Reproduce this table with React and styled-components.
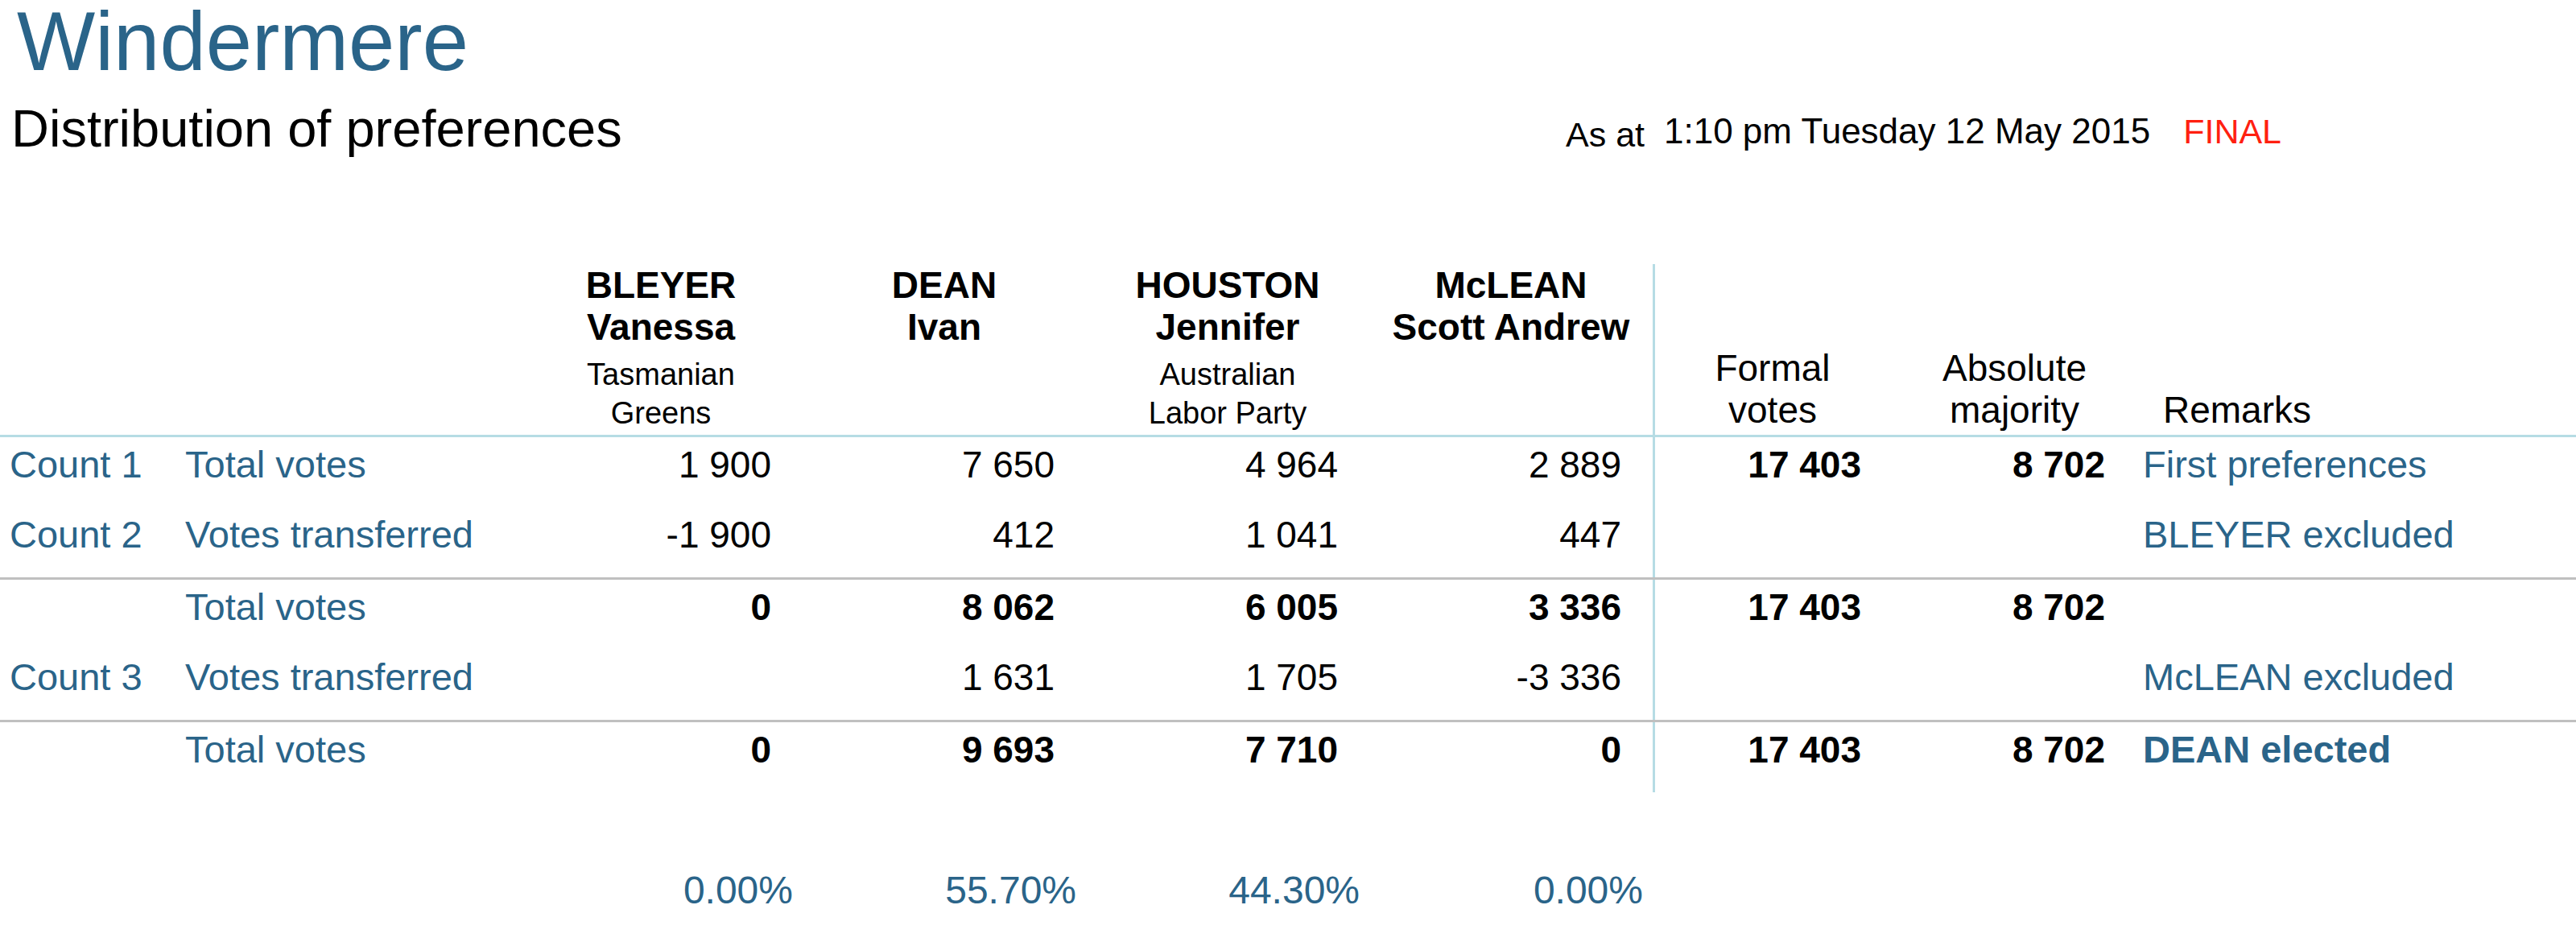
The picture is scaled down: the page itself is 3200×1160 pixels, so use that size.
import React from 'react'
import styled, { createGlobalStyle } from 'styled-components'

const candidates = [
  { surname: 'BLEYER', given: 'Vanessa', party: ['Tasmanian', 'Greens'] },
  { surname: 'DEAN', given: 'Ivan', party: [] },
  { surname: 'HOUSTON', given: 'Jennifer', party: ['Australian', 'Labor Party'] },
  { surname: 'McLEAN', given: 'Scott Andrew', party: [] },
]

const rows = [
  { count: 'Count 1', label: 'Total votes', votes: ['1 900', '7 650', '4 964', '2 889'], formal: '17 403', majority: '8 702', remark: 'First preferences' },
  { count: 'Count 2', label: 'Votes transferred', votes: ['-1 900', '412', '1 041', '447'], remark: 'BLEYER excluded', divider: true },
  { label: 'Total votes', votes: ['0', '8 062', '6 005', '3 336'], formal: '17 403', majority: '8 702', bold: true },
  { count: 'Count 3', label: 'Votes transferred', votes: ['', '1 631', '1 705', '-3 336'], remark: 'McLEAN excluded', divider: true },
  { label: 'Total votes', votes: ['0', '9 693', '7 710', '0'], formal: '17 403', majority: '8 702', bold: true, remark: 'DEAN elected', strong: true },
]

const percentages = ['0.00%', '55.70%', '44.30%', '0.00%']

const App = () => {
  return (
    <>
      <GlobalStyle />
      <Page>
        <Header>
          <Title>Windermere</Title>
          <SubRow>
            <Subtitle>Distribution of preferences</Subtitle>
            <Stamp>
              As at
              <StampTime>1:10 pm Tuesday 12 May 2015</StampTime>
              <Final>FINAL</Final>
            </Stamp>
          </SubRow>
        </Header>

        <Table>
          <HeadRow>
            <div />
            <div />
            {candidates.map(c => (
              <CandHead key={c.surname}>
                <Name>{c.surname}</Name>
                <Name>{c.given}</Name>
                {c.party.length > 0 && (
                  <Party>
                    {c.party.map(line => <div key={line}>{line}</div>)}
                  </Party>
                )}
              </CandHead>
            ))}
            <StatHead $rule>Formal<br />votes</StatHead>
            <StatHead>Absolute<br />majority</StatHead>
            <RemarksHead>Remarks</RemarksHead>
          </HeadRow>

          {rows.map((r, i) => (
            <BodyRow key={i} $divider={r.divider}>
              <LabelCell>{r.count}</LabelCell>
              <LabelCell>{r.label}</LabelCell>
              {r.votes.map((v, j) => (
                <NumCell key={j} $bold={r.bold}>{v}</NumCell>
              ))}
              <NumCell $bold $rule>{r.formal}</NumCell>
              <NumCell $bold>{r.majority}</NumCell>
              <RemarkCell $bold={r.strong}>{r.remark}</RemarkCell>
            </BodyRow>
          ))}
        </Table>

        <PercentRow>
          <div />
          <div />
          {percentages.map((p, i) => (
            <PercentCell key={i}>{p}</PercentCell>
          ))}
        </PercentRow>
      </Page>
    </>
  )
}

export default App

const GlobalStyle = createGlobalStyle`
    * {
        box-sizing: border-box;
    }
    body {
        margin: 0;
        background: #fff;
        font-family: "Liberation Sans", Arial, Helvetica, sans-serif;
        color: #000;
    }
`

const BLUE = '#2a6489'
const RULE = '#b6dce4'
const COLUMNS = '218px 427px repeat(4, 352px) 298px 303px 1fr'

const Page = styled.div`
    width: 3200px;
`
const Header = styled.header`
    padding: 0 14px;
`
const Title = styled.h1`
    margin: 0;
    padding-left: 7px;
    font-size: 103px;
    font-weight: normal;
    line-height: 103px;
    color: ${BLUE};
`
const SubRow = styled.div`
    display: grid;
    grid-template-columns: 1931px auto;
    align-items: baseline;
    height: 74px;
    margin-top: 20px;
`
const Subtitle = styled.h2`
    margin: 0;
    font-size: 65px;
    font-weight: normal;
    line-height: 74px;
`
const Stamp = styled.div`
    font-size: 43px;
    line-height: 43px;
    white-space: nowrap;
`
const StampTime = styled.span`
    margin-left: 24px;
    font-size: 44px;
    vertical-align: 4px;
`
const Final = styled.span`
    margin-left: 41px;
    vertical-align: 4px;
    color: #ff2010;
`
const Table = styled.div`
    margin-top: 131px;
    font-size: 46px;
    line-height: 52px;
`
const HeadRow = styled.div`
    display: grid;
    grid-template-columns: ${COLUMNS};
    height: 215px;
    border-bottom: 3px solid ${RULE};
`
const CandHead = styled.div`
    padding: 0 10px;
    text-align: center;
`
const Name = styled.div`
    font-weight: bold;
    white-space: nowrap;
`
const Party = styled.div`
    margin-top: 9px;
    font-size: 38px;
    line-height: 48px;
`
const StatHead = styled.div`
    display: flex;
    flex-direction: column;
    justify-content: flex-end;
    padding: 0 39px 5px;
    text-align: center;
    ${p => p.$rule && `border-left: 3px solid ${RULE}; padding-left: 36px;`}
`
const RemarksHead = styled.div`
    display: flex;
    flex-direction: column;
    justify-content: flex-end;
    padding: 0 0 5px 33px;
`
const BodyRow = styled.div`
    display: grid;
    grid-template-columns: ${COLUMNS};
    height: ${p => p.$divider ? '90px' : '87px'};
    border-bottom: ${p => p.$divider ? '3px solid #c0c0c0' : 'none'};
`
const LabelCell = styled.div`
    padding: 8px 0 0 12px;
    font-size: 47px;
    color: ${BLUE};
    white-space: nowrap;
`
const NumCell = styled.div`
    padding: 8px 39px 0;
    text-align: right;
    font-weight: ${p => p.$bold ? 'bold' : 'normal'};
    white-space: nowrap;
    ${p => p.$rule && `border-left: 3px solid ${RULE}; padding-left: 36px;`}
`
const RemarkCell = styled.div`
    padding: 8px 0 0 8px;
    font-size: 47px;
    color: ${BLUE};
    font-weight: ${p => p.$bold ? 'bold' : 'normal'};
    white-space: nowrap;
`
const PercentRow = styled.div`
    display: grid;
    grid-template-columns: ${COLUMNS};
    margin-top: 94px;
    font-size: 48px;
    line-height: 56px;
`
const PercentCell = styled.div`
    padding-right: 12px;
    text-align: right;
    color: ${BLUE};
`
